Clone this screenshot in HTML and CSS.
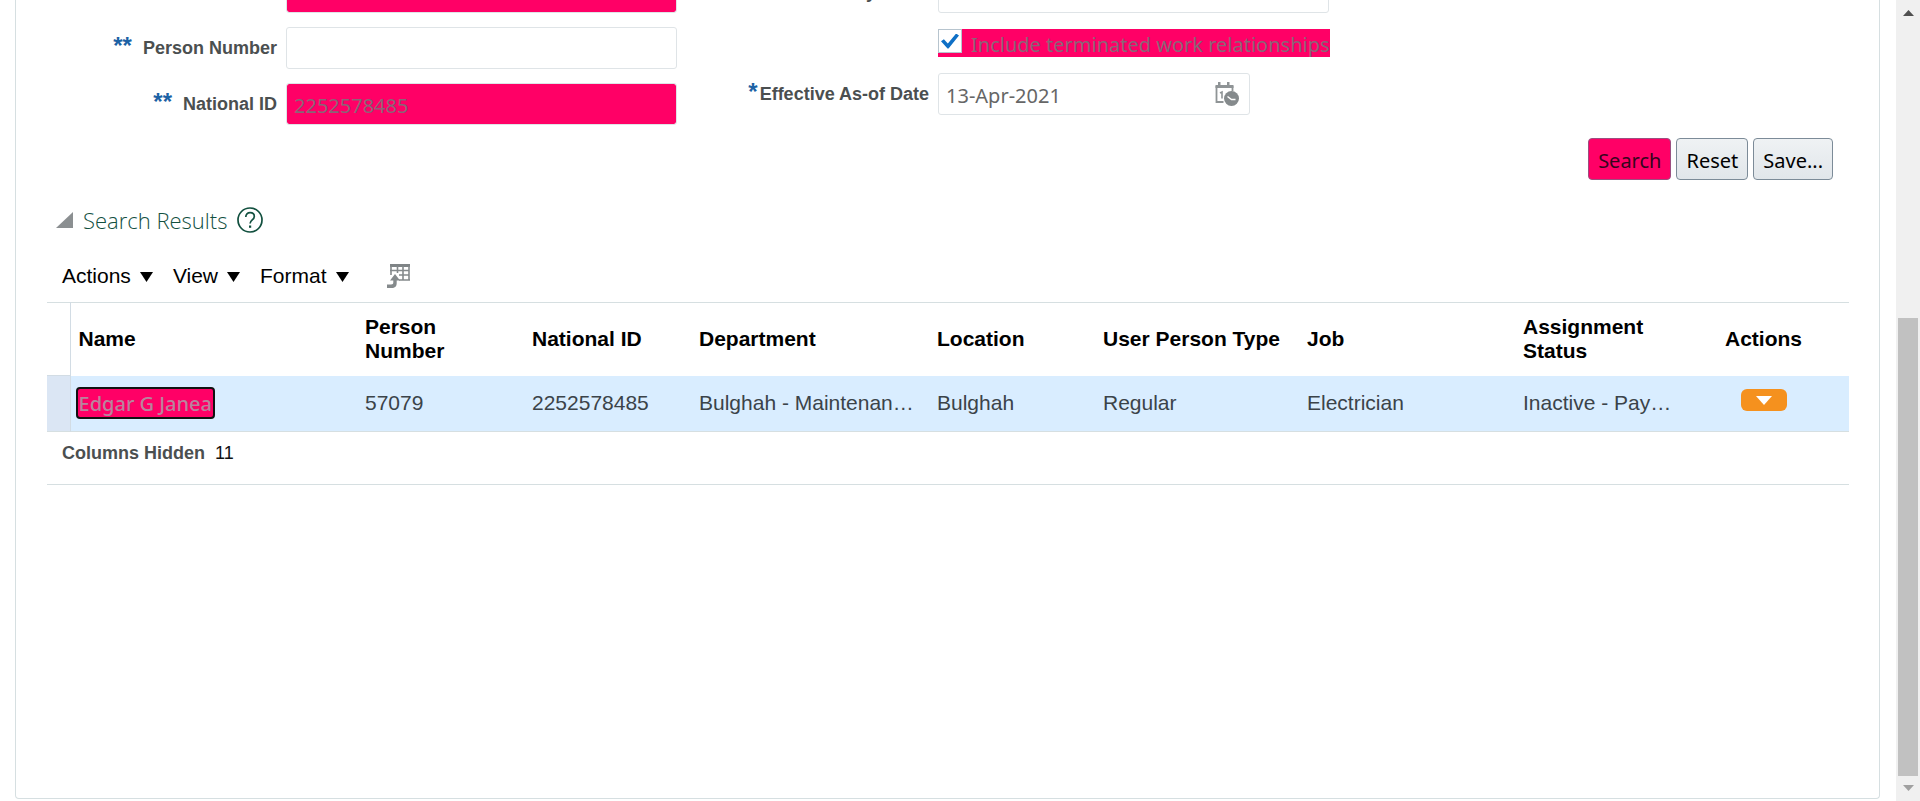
FILE: index.html
```html
<!DOCTYPE html>
<html lang="en">
<head>
<meta charset="utf-8">
<title>Person Search</title>
<link rel="stylesheet" href="styles.css">
</head>
<body>
<div class="page">
  <main class="panel">
    <form class="search-form">
      <div class="form-column">
        <div class="field-row">
          <span></span>
          <input class="input highlighted" id="name" type="text" aria-label="Name">
        </div>
        <div class="field-row">
          <label class="label" for="person-number"><span class="required">**</span>Person Number</label>
          <input class="input" id="person-number" type="text">
        </div>
        <div class="field-row">
          <label class="label" for="national-id"><span class="required">**</span>National ID</label>
          <input class="input highlighted" id="national-id" type="text" value="2252578485">
        </div>
      </div>
      <div class="form-column form-column-right">
        <div class="field-row">
          <label class="label" for="keywords">Keywords</label>
          <input class="input" id="keywords" type="text">
        </div>
        <div class="field-row">
          <span></span>
          <label class="check-label"><input class="checkbox" type="checkbox" checked><span class="check-text">Include terminated work relationships</span></label>
        </div>
        <div class="field-row">
          <label class="label" for="effective-date"><span class="required required-single">*</span>Effective As-of Date</label>
          <div class="date-field">
            <input class="date-input" id="effective-date" type="text" value="13-Apr-2021">
            <button class="icon-button" type="button" aria-label="Select date">
              <svg width="24" height="24" viewBox="0 0 24 24">
                <path d="M1.500 4v16h7M17.500 4v5" fill="none" stroke="#8f9496" stroke-width="1.800"/>
                <path d="M.5 3h18v3H.5zM3 0h2.500v4H3zM12 0h2.500v4H12z" fill="#8f9496"/>
                <path d="M5 11l2-1v6.500" fill="none" stroke="#8f9496" stroke-width="1.600"/>
                <circle cx="16.500" cy="16.500" r="7.500" fill="#858a8c"/>
                <path d="M12.500 14.500l4 3h4" fill="none" stroke="#fff" stroke-width="1.500"/>
              </svg>
            </button>
          </div>
        </div>
      </div>
    </form>

    <div class="form-actions">
      <button class="button button-search" type="submit">Search</button>
      <button class="button" type="reset">Reset</button>
      <button class="button" type="button">Save...</button>
    </div>

    <section class="results">
      <div class="results-heading">
        <svg class="disclosure" width="17" height="16" viewBox="0 0 17 16"><path d="M17 0v16H0z" fill="#8b8f91"/></svg>
        <h2 class="results-title">Search Results</h2>
        <button class="icon-button" type="button" aria-label="Help">
          <svg width="26" height="26" viewBox="0 0 26 26" fill="none" stroke="#12503f" stroke-width="1.700">
            <circle cx="13" cy="13" r="12"/>
            <path d="M8.800 10c0-2.600 1.700-4.300 4.300-4.300 2.500 0 4.200 1.500 4.200 3.700 0 3.400-4.200 3.700-4.200 7.200"/>
            <path d="M13.100 18.500v2.300" stroke-width="2.200"/>
          </svg>
        </button>
      </div>

      <div class="toolbar">
        <button class="menu-button" type="button">Actions<svg class="caret" width="13" height="10" viewBox="0 0 13 10"><path d="M0 0h13L6.500 10z"/></svg></button>
        <button class="menu-button" type="button">View<svg class="caret" width="13" height="10" viewBox="0 0 13 10"><path d="M0 0h13L6.500 10z"/></svg></button>
        <button class="menu-button" type="button">Format<svg class="caret" width="13" height="10" viewBox="0 0 13 10"><path d="M0 0h13L6.500 10z"/></svg></button>
        <button class="icon-button export-button" type="button" aria-label="Export to spreadsheet">
          <svg width="23" height="24" viewBox="0 0 23 24">
            <path d="M3 0h20v3H3z" fill="#7f8486"/>
            <path d="M4 2v9M3 6.500h19M12 11h10M12 16h11M10.500 2v7M16 2v14M22 2v14" fill="none" stroke="#858a8c" stroke-width="1.600"/>
            <path d="M8 10l5 6.500h-3.300V19c0 3.600-1.700 5-5 5H0v-3.500h4c1.700 0 2.300-.6 2.300-2.200v-1.800H3z" fill="#858a8c"/>
          </svg>
        </button>
      </div>

      <table class="table">
        <colgroup>
          <col class="col-handle"><col class="col-name"><col class="col-number"><col class="col-number"><col class="col-department"><col class="col-location"><col class="col-type"><col class="col-job"><col class="col-status"><col class="col-actions">
        </colgroup>
        <thead>
          <tr>
            <td class="handle"></td>
            <th scope="col">Name</th>
            <th scope="col">Person Number</th>
            <th scope="col">National ID</th>
            <th scope="col">Department</th>
            <th scope="col">Location</th>
            <th scope="col">User Person Type</th>
            <th scope="col">Job</th>
            <th scope="col">Assignment Status</th>
            <th scope="col" class="centered">Actions</th>
          </tr>
        </thead>
        <tbody>
          <tr>
            <td class="handle"></td>
            <td class="name-cell"><a class="person-link" href="#">Edgar G Janea</a></td>
            <td>57079</td>
            <td>2252578485</td>
            <td>Bulghah - Maintenan…</td>
            <td>Bulghah</td>
            <td>Regular</td>
            <td>Electrician</td>
            <td>Inactive - Pay…</td>
            <td class="centered actions-cell">
              <button class="row-action" type="button" aria-label="Row actions"><svg width="16" height="9" viewBox="0 0 16 9"><path d="M0 0h16L8 9z" fill="#fff"/></svg></button>
            </td>
          </tr>
        </tbody>
      </table>
      <div class="table-footer"><strong class="footer-label">Columns Hidden</strong><span>11</span></div>
    </section>
  </main>
  <div class="scrollbar">
    <svg class="scroll-arrow" width="11" height="6" viewBox="0 0 11 6"><path d="M0 6h11L5.500 0z" fill="#505050"/></svg>
    <div class="scroll-track"><div class="scroll-thumb"></div></div>
    <svg class="scroll-arrow" width="11" height="6" viewBox="0 0 11 6"><path d="M0 0h11L5.500 6z" fill="#a0a0a0"/></svg>
  </div>
</div>
</body>
</html>
```
FILE: styles.css
```css
* { box-sizing: border-box; }

body {
  margin: 0;
  background: #fff;
  color: #333;
  font-family: "Liberation Sans", Arial, sans-serif;
  font-size: 21px;
  overflow: hidden;
}

button { font: inherit; color: inherit; cursor: pointer; }

.page { display: flex; height: 100vh; overflow: hidden; }

.panel {
  flex: 1;
  display: flex;
  flex-direction: column;
  margin: 0 16px 2px 15px;
  padding: 0 30px 0 31px;
  border: 1px solid #d6dfe1;
  border-top: 0;
  border-radius: 0 0 4px 4px;
}

/* Search form, scrolled partly out of view */
.search-form { display: flex; margin-top: -29px; }
.form-column { display: flex; flex-direction: column; gap: 14px; }
.form-column-right { gap: 16px; }

.field-row {
  display: grid;
  grid-template-columns: 230px 391px;
  column-gap: 9px;
  align-items: center;
}
.form-column-right .field-row { grid-template-columns: 252px 391px; }

.label {
  display: flex;
  justify-content: flex-end;
  color: #4b4f50;
  font-size: 18px;
  font-weight: bold;
  line-height: 22px;
  white-space: nowrap;
}
.required { margin-right: 11px; color: #1c62a5; font-size: 24px; line-height: 18px; }
.required-single { margin-right: 2px; }

.input, .date-field {
  height: 42px;
  border: 1px solid #dfe4e7;
  border-radius: 3px;
  background: #fff;
}
.input, .date-input {
  padding: 2px 7px 0;
  color: #666;
  font-family: "Noto Sans", "Open Sans", sans-serif;
  font-size: 20px;
}
.highlighted { background: #ff0066; background-clip: padding-box; color: #8a6577; }

.check-label {
  display: flex;
  width: max-content;
  height: 28px;
  gap: 9px;
  background: #ff0066;
  color: #8a6577;
  font-family: "Noto Sans", "Open Sans", sans-serif;
  font-size: 20px;
  line-height: 32px;
}
.check-text { white-space: nowrap; }
.checkbox {
  appearance: none;
  width: 24px;
  height: 24px;
  margin: 0;
  border: 1px solid #b7c4ce;
  background: #fff;
  display: grid;
  place-items: center;
}
.checkbox:checked::before {
  content: "";
  width: 18px;
  height: 15px;
  background: #0f70c6;
  clip-path: polygon(0 52%, 16% 38%, 38% 66%, 84% 0, 100% 14%, 42% 100%, 36% 100%);
}

.date-field { display: flex; align-items: center; width: 312px; padding-right: 10px; }
.date-input { flex: 1; min-width: 0; height: 40px; border: 0; background: none; }
.icon-button { display: flex; padding: 0; border: 0; background: none; }

.form-actions { display: flex; justify-content: flex-end; gap: 5px; margin-top: 13px; padding-right: 16px; }
.button {
  height: 42px;
  padding: 2px 9px 0;
  border: 1px solid #7c8b98;
  border-radius: 4px;
  background: linear-gradient(#eff2f4, #e1e6ea);
  color: #000;
  font-family: "Noto Sans", "Open Sans", sans-serif;
  font-size: 20px;
}
.button-search { border-color: #9c4f80; background: #ff0066; color: #35051d; }

.results-heading { display: flex; align-items: center; gap: 10px; height: 34px; margin-top: 23px; padding-left: 9px; }
.results-title {
  margin: 0;
  color: #12503f;
  font-family: "Open Sans", "Noto Sans", sans-serif;
  font-size: 22px;
  font-weight: 300;
}

.toolbar { display: flex; align-items: center; height: 65px; padding: 13px 15px 0; gap: 20px; }
.menu-button { display: flex; align-items: center; gap: 9px; padding: 0; border: 0; background: none; color: #000; }
.caret { margin-top: 2px; }
.export-button { margin-left: 18px; }

.table {
  width: 100%;
  table-layout: fixed;
  border-collapse: collapse;
  border-top: 1px solid #d6dfe1;
  border-bottom: 1px solid #d6dfe1;
  line-height: 24px;
}
.col-handle { width: 23px; }
.col-name { width: 287px; }
.col-number { width: 167px; }
.col-department { width: 238px; }
.col-location { width: 166px; }
.col-type { width: 204px; }
.col-job { width: 216px; }
.col-status { width: 163px; }
.col-actions { width: 171px; }
.table th, .table td { padding: 0 8px; text-align: left; vertical-align: middle; white-space: nowrap; }
.table th { height: 73px; padding-right: 16px; color: #000; white-space: normal; }
.table tbody td { height: 56px; background: #d9edff; color: #3b4349; }
.table .handle { padding: 0; border-right: 1px solid #d2dce4; }
.table tbody .handle { border-top: 1px solid #d2dce4; background: #dbe6f4; }
.table .centered { padding: 0; text-align: center; }
.table .name-cell { padding-left: 5px; }
.table th:nth-child(7) { padding-right: 0; }

.person-link {
  display: inline-block;
  padding: 2px 1px 0;
  border: 2px solid #111;
  border-radius: 4px;
  background: #ff0066;
  color: #b8849d;
  font-family: "Noto Sans", "Open Sans", sans-serif;
  font-size: 20px;
  font-weight: 500;
  line-height: 26px;
  text-decoration: none;
}

.table .actions-cell { padding-bottom: 8px; }
.row-action {
  display: inline-flex;
  align-items: center;
  justify-content: center;
  width: 46px;
  height: 22px;
  padding: 0;
  border: 0;
  border-radius: 6px;
  background: #f5911e;
  vertical-align: middle;
}

.table-footer {
  display: flex;
  gap: 10px;
  padding: 10px 15px 20px;
  border-bottom: 1px solid #d6dfe1;
  color: #111;
  font-size: 18px;
  line-height: 22px;
}
.footer-label { color: #4b4f50; }

.scrollbar {
  display: flex;
  flex-direction: column;
  align-items: center;
  width: 25px;
  padding: 10px 2px;
  background: #f0f0f0;
}
.scroll-track { flex: 1; display: flex; flex-direction: column; justify-content: flex-end; width: 100%; padding: 9px 0; }
.scroll-thumb { height: 61%; background: #c1c1c1; }
```
